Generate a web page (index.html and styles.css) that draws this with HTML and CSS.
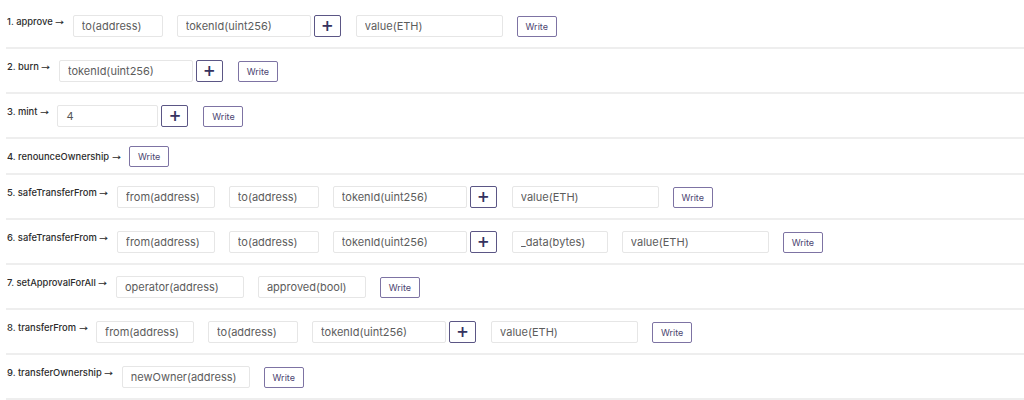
FILE: index.html
```html
<!DOCTYPE html>
<html>
<head>
<meta charset="utf-8">
<link rel="stylesheet" href="styles.css">
</head>
<body>
<div class="list">
  <div class="row">
    <span class="label">1. approve <span class="arrow">→</span></span>
    <div class="fields">
      <div class="group"><input class="inp w-to" placeholder="to(address)"></div>
      <div class="group"><input class="inp w-token" placeholder="tokenId(uint256)"><button class="plus">+</button></div>
      <div class="group"><input class="inp w-value" placeholder="value(ETH)"></div>
      <button class="write">Write</button>
    </div>
  </div>
  <div class="row">
    <span class="label">2. burn <span class="arrow">→</span></span>
    <div class="fields">
      <div class="group"><input class="inp w-token" placeholder="tokenId(uint256)"><button class="plus">+</button></div>
      <button class="write">Write</button>
    </div>
  </div>
  <div class="row">
    <span class="label">3. mint <span class="arrow">→</span></span>
    <div class="fields">
      <div class="group"><input class="inp w-mint" value="4"><button class="plus">+</button></div>
      <button class="write">Write</button>
    </div>
  </div>
  <div class="row">
    <span class="label">4. renounceOwnership <span class="arrow">→</span></span>
    <div class="fields">
      <button class="write">Write</button>
    </div>
  </div>
  <div class="row">
    <span class="label">5. safeTransferFrom <span class="arrow">→</span></span>
    <div class="fields">
      <div class="group"><input class="inp w-from" placeholder="from(address)"></div>
      <div class="group"><input class="inp w-to" placeholder="to(address)"></div>
      <div class="group"><input class="inp w-token" placeholder="tokenId(uint256)"><button class="plus">+</button></div>
      <div class="group"><input class="inp w-value" placeholder="value(ETH)"></div>
      <button class="write">Write</button>
    </div>
  </div>
  <div class="row">
    <span class="label">6. safeTransferFrom <span class="arrow">→</span></span>
    <div class="fields">
      <div class="group"><input class="inp w-from" placeholder="from(address)"></div>
      <div class="group"><input class="inp w-to" placeholder="to(address)"></div>
      <div class="group"><input class="inp w-token" placeholder="tokenId(uint256)"><button class="plus">+</button></div>
      <div class="group"><input class="inp w-data" placeholder="_data(bytes)"></div>
      <div class="group"><input class="inp w-value" placeholder="value(ETH)"></div>
      <button class="write">Write</button>
    </div>
  </div>
  <div class="row">
    <span class="label">7. setApprovalForAll <span class="arrow">→</span></span>
    <div class="fields">
      <div class="group"><input class="inp w-operator" placeholder="operator(address)"></div>
      <div class="group"><input class="inp w-bool" placeholder="approved(bool)"></div>
      <button class="write">Write</button>
    </div>
  </div>
  <div class="row">
    <span class="label">8. transferFrom <span class="arrow">→</span></span>
    <div class="fields">
      <div class="group"><input class="inp w-from" placeholder="from(address)"></div>
      <div class="group"><input class="inp w-to" placeholder="to(address)"></div>
      <div class="group"><input class="inp w-token" placeholder="tokenId(uint256)"><button class="plus">+</button></div>
      <div class="group"><input class="inp w-value" placeholder="value(ETH)"></div>
      <button class="write">Write</button>
    </div>
  </div>
  <div class="row">
    <span class="label">9. transferOwnership <span class="arrow">→</span></span>
    <div class="fields">
      <div class="group"><input class="inp w-operator" placeholder="newOwner(address)"></div>
      <button class="write">Write</button>
    </div>
  </div>
</div>
</body>
</html>
```
FILE: styles.css
```css
html, body {
  margin: 0;
  padding: 0;
  background: #ffffff;
}
body {
  font-family: Inter, "Noto Sans", "Liberation Sans", sans-serif;
  color: #2f2f2f;
}
.list {
  padding: 4px 0 0 6px;
}
.row {
  display: flex;
  align-items: flex-start;
  padding: 7px 0 6px 1px;
  border-bottom: 2px solid #eeeeee;
}
.label {
  display: block;
  height: 21px;
  overflow: hidden;
  font-size: 9.4px;
  font-weight: 500;
  line-height: 21px;
  color: #2c2c2c;
  margin-right: 8px;
  white-space: nowrap;
}
.arrow {
  font-family: "DejaVu Sans", sans-serif;
  font-weight: 400;
  font-size: 9px;
  line-height: 1;
  display: inline-block;
  transform: scaleX(1.2);
  transform-origin: left center;
  margin-right: 2px;
}
.fields {
  display: flex;
  align-items: center;
  gap: 14px;
}
.group {
  display: flex;
  align-items: center;
  gap: 3px;
  margin: 4px 0;
}
.inp {
  box-sizing: border-box;
  height: 22px;
  border: 1px solid #e6e6e6;
  border-radius: 2px;
  padding: 0 8px;
  font-family: inherit;
  font-size: 11px;
  color: #555555;
  background: #ffffff;
  outline: none;
}
.inp::placeholder {
  color: #5c5c5c;
  opacity: 1;
}
.w-to { width: 90px; }
.w-from { width: 98px; }
.w-token { width: 134px; }
.w-value { width: 147px; }
.w-data { width: 96px; }
.w-operator { width: 128px; }
.w-bool { width: 108px; }
.w-mint { width: 101px; }
.plus {
  box-sizing: border-box;
  width: 27px;
  height: 22px;
  border: 1px solid #5b5685;
  border-radius: 2px;
  background: #ffffff;
  color: #35325f;
  font-family: "DejaVu Sans", sans-serif;
  font-size: 15px;
  font-weight: 700;
  line-height: 18px;
  padding: 0;
  margin-right: 1px;
}
.write {
  box-sizing: border-box;
  width: 40px;
  height: 21px;
  border: 1px solid #7d73a3;
  border-radius: 2px;
  background: #ffffff;
  color: #4b4470;
  font-family: inherit;
  font-size: 9px;
  padding: 0;
}
```
